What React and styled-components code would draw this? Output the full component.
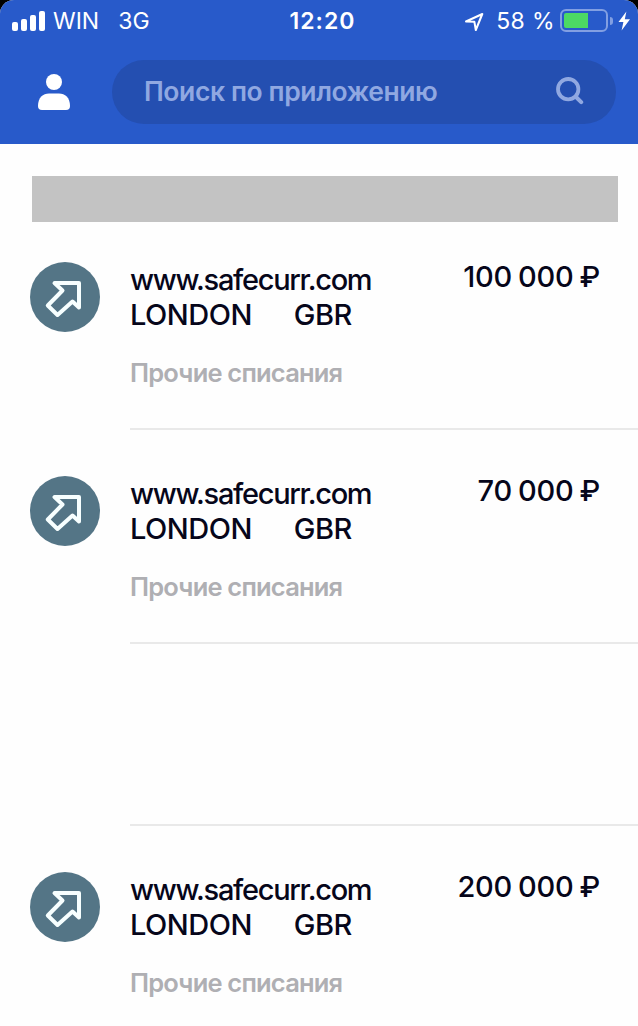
import styled, { createGlobalStyle } from "styled-components";

const operations = [
  { id: 1, amount: "100 000 ₽", height: 214 },
  { id: 2, amount: "70 000 ₽", height: 214 },
  { id: 3, height: 182 },
  { id: 4, amount: "200 000 ₽", height: 214 },
];

function App() {
  return (
    <Screen>
      <GlobalStyle />
      <Header>
        <StatusBar>
          <Network>
            <Signal />
            <Carrier>WIN</Carrier>
            <NetworkType>3G</NetworkType>
          </Network>
          <Clock>12:20</Clock>
          <Power>
            <LocationIcon />
            <Percent>58 %</Percent>
            <Battery>
              <Charge />
            </Battery>
            <BatteryTip />
            <BoltIcon />
          </Power>
        </StatusBar>
        <SearchRow>
          <ProfileIcon />
          <SearchField>
            <Placeholder>Поиск по приложению</Placeholder>
            <SearchIcon />
          </SearchField>
        </SearchRow>
      </Header>
      <Stub />
      <List>
        {operations.map((item) => (
          <Row key={item.id} $height={item.height}>
            {item.amount && (
              <Circle>
                <ArrowIcon />
              </Circle>
            )}
            <Details>
              {item.amount && (
                <>
                  <Description>
                    <Site>www.safecurr.com</Site>
                    <Place>
                      <span>LONDON</span>
                      <span>GBR</span>
                    </Place>
                    <Category>Прочие списания</Category>
                  </Description>
                  <Amount>{item.amount}</Amount>
                </>
              )}
            </Details>
          </Row>
        ))}
      </List>
    </Screen>
  );
}

export default App;

const Signal = () => (
  <svg width="34" height="20" viewBox="0 0 34 20" fill="#fff">
    <rect x="0" y="11" width="6" height="9" rx="2" />
    <rect x="9" y="8" width="6" height="12" rx="2" />
    <rect x="18" y="4" width="6" height="16" rx="2" />
    <rect x="27" y="0" width="6" height="20" rx="2" />
  </svg>
);

const LocationIcon = () => (
  <svg width="20" height="20" viewBox="0 0 20 20" fill="none" stroke="#fff" strokeWidth="2" strokeLinejoin="round">
    <path d="M2 10.500 L18.300 3 L11.800 19 L10.400 10.800 Z" />
  </svg>
);

const BoltIcon = () => (
  <svg width="13" height="20" viewBox="0 0 13 20" fill="#fff">
    <path d="M8.4 0.5 L0.5 11 H5.4 L3.6 19.5 L12 8.3 H6.8 Z" />
  </svg>
);

const ProfileIcon = () => (
  <svg width="32" height="36" viewBox="0 0 32 36" fill="#fff">
    <circle cx="16" cy="8" r="8" />
    <path d="M0 32 C0 23.500 5 19.500 11 19.500 H21 C27 19.500 32 23.500 32 32 Q32 36 28 36 H4 Q0 36 0 32 Z" />
  </svg>
);

const SearchIcon = () => (
  <svg width="28" height="30" viewBox="0 0 28 30" fill="none" stroke="#90a8e1" strokeLinecap="round">
    <circle cx="12.200" cy="12.200" r="10.200" strokeWidth="3.800" />
    <path d="M20 20 L25.200 25.200" strokeWidth="4" />
  </svg>
);

const ArrowIcon = () => (
  <svg width="70" height="70" viewBox="0 0 70 70" fill="none" stroke="#f7ffff" strokeWidth="4" strokeLinejoin="round">
    <path d="M24.500 21 H49 V45.500 L42.500 39.500 L27.500 53 L17.800 43.500 L32.500 28.500 Z" />
  </svg>
);

const GlobalStyle = createGlobalStyle`
  body {
    margin: 0;
    background-color: #000;
    font-family: Inter, "Liberation Sans", sans-serif;
  }
`;

const Screen = styled.div`
  width: 638px;
  height: 1026px;
  overflow: hidden;
  background-color: #fefefe;
  border-radius: 14px 14px 0 0;
`;

const Header = styled.div`
  height: 144px;
  background-color: #285aca;
`;

const StatusBar = styled.div`
  display: grid;
  grid-template-columns: 1fr auto 1fr;
  align-items: center;
  height: 41px;
  padding: 0 7px 0 12px;
  color: #fff;
  font-size: 23px;
`;

const Network = styled.div`
  display: flex;
  align-items: center;
`;

const Carrier = styled.span`
  margin-left: 7px;
`;

const NetworkType = styled.span`
  margin-left: 19px;
`;

const Clock = styled.div`
  padding-left: 2px;
  font-weight: 600;
  letter-spacing: 1px;
`;

const Power = styled.div`
  display: flex;
  align-items: center;
  justify-content: flex-end;
`;

const Percent = styled.span`
  margin: 0 5px 0 12px;
  letter-spacing: 0.4px;
`;

const Battery = styled.div`
  box-sizing: border-box;
  width: 48px;
  height: 23px;
  padding: 2px;
  border: 2px solid #829fe2;
  border-radius: 6px;
`;

const Charge = styled.div`
  width: 24px;
  height: 15px;
  background-color: #4cd964;
  border-radius: 2px 0 0 2px;
`;

const BatteryTip = styled.div`
  width: 3px;
  height: 8px;
  margin: 0 5px 0 2px;
  background-color: #829fe2;
  border-radius: 0 3px 3px 0;
`;

const SearchRow = styled.div`
  display: flex;
  align-items: center;
  gap: 42px;
  padding: 19px 22px 0 38px;
`;

const SearchField = styled.div`
  display: flex;
  flex: 1;
  align-items: center;
  justify-content: space-between;
  height: 64px;
  padding: 0 32px;
  box-sizing: border-box;
  background-color: #244fb1;
  border-radius: 32px;
`;

const Placeholder = styled.span`
  padding-bottom: 2px;
  color: #90a8e1;
  font-size: 26.5px;
  font-weight: 560;
  letter-spacing: -0.4px;
`;

const Stub = styled.div`
  height: 46px;
  margin: 32px 20px 0 32px;
  background-color: #c3c3c3;
`;

const List = styled.div`
  margin-top: -6px;
`;

const Row = styled.div`
  display: flex;
  justify-content: flex-end;
  height: ${(props) => props.$height}px;
`;

const Circle = styled.div`
  width: 70px;
  height: 70px;
  margin: 46px 30px 0 30px;
  background-color: #547586;
  border-radius: 50%;
`;

const Details = styled.div`
  display: flex;
  justify-content: space-between;
  width: 508px;
  padding: 46px 38px 0 0;
  box-sizing: border-box;
  border-bottom: 2px solid #e9e9e9;
  color: #06061a;
  font-size: 29px;
  font-weight: 450;
  line-height: 35px;
`;

const Description = styled.div`
  white-space: nowrap;
`;

const Site = styled.div`
  letter-spacing: -1.3px;
`;

const Place = styled.div`
  display: flex;
  gap: 42px;
  letter-spacing: -0.5px;
`;

const Category = styled.div`
  margin-top: 23px;
  color: #afafb3;
  font-size: 25.5px;
  font-weight: 560;
  letter-spacing: -0.8px;
`;

const Amount = styled.div`
  margin-top: -3px;
  letter-spacing: -0.3px;
  word-spacing: -1.2px;
  white-space: nowrap;
`;
